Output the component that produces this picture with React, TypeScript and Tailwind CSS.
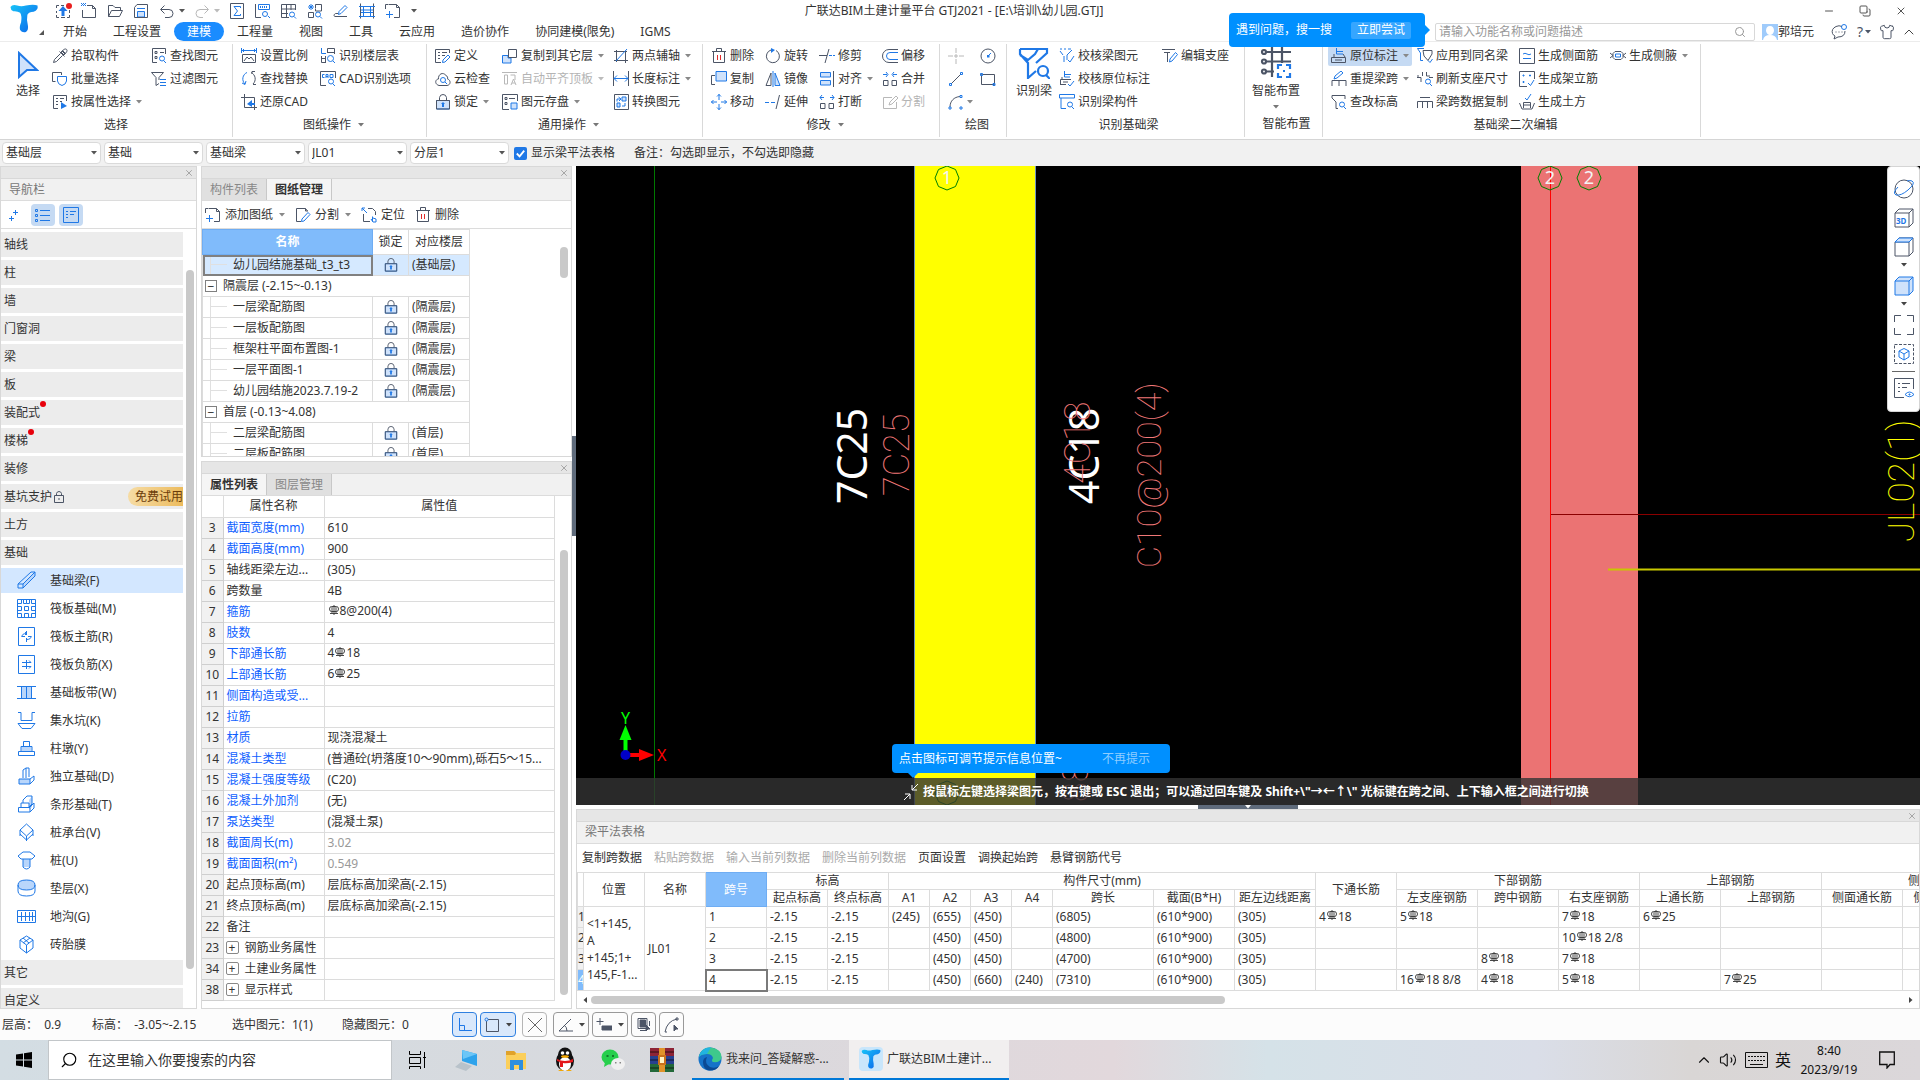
import { useState } from 'react';
import type { ReactNode } from 'react';
import clsx from 'clsx';
import { ChevronUp, Copy, Minus, Search, Shirt, Volume2, X } from 'lucide-react';

// d: dark strokes, b: blue strokes, f: light blue area, k: solid blue, r: red strokes
interface Glyph {
    d?: string;
    b?: string;
    f?: string;
    k?: string;
    r?: string;
}

const GLYPHS: Record<string, Glyph> = {
    upload: { d: 'M1.500 5V2.500H4M6 2.500h3M1.500 8v2M14.500 7v3M1.500 12v2.500H4M6 14.500h4M12 14.500h2.500V12', k: 'M8 3L12.500 8H9.500V13H6.500V8H3.500Z' },
    newFile: { d: 'M6 2.500H11.500L14.500 5.500V14.500H1.500V7M11.500 2.500V5.500H14.500', b: 'M0 .5h1M2 .5h1M4 .5h1M1 1.500h1M3 1.500h1M0 2.500h1M2 2.500h1M4 2.500h1' },
    folder: { d: 'M1.500 13.500V2.500H6L8 4.500H13.500V7M1.500 13.500L4.500 7.500H15.500L12.500 13.500Z' },
    save: { d: 'M1.500 14.500V4.500L4 1.500H14.500V14.500Z', f: 'M4.500 14V8.500H11.500V14Z', b: 'M4 5.500H12' },
    undo: { d: 'M5.500 2.500L1.500 6.500L5.500 10.500M2 6.500H10A4 4 0 0 1 10 14.500H6' },
    redo: { d: 'M10.500 2.500L14.500 6.500L10.500 10.500M14 6.500H6A4 4 0 0 0 6 14.500H9' },
    sum: { d: 'M1.500 .5H14.500V15.500H1.500Z', b: 'M11.500 5V3.500H5L8.500 8L5 12.500H11.500V11' },
    ruler: { d: 'M.5 1V14.500H6', b: 'M3.500 1.500H14.500V6.500H3.500ZM5.500 3v2M7.500 3v2M9.500 3v2M11.500 3v2M13 13l2 2M12.500 11A2.500 2.500 0 1 1 7.500 11A2.500 2.500 0 1 1 12.500 11' },
    gridFind: { d: 'M8 14.500H.5V1.500H14.500V7M.5 6H14M.5 10.500H7M5.500 2V14M10 2V7', b: 'M13 13.500l2 2M13.500 11.500A2.500 2.500 0 1 1 8.500 11.500A2.500 2.500 0 1 1 13.500 11.500' },
    gearFind: { d: 'M8.500 5.500V1.500H14.500V8H8.500V6M1.500 9.500H6.500V14.500H1.500Z', b: 'M4 1v6M1 4h6M2 2l4 4M6 2L2 6M13 13.500l2 2M13.500 11.500A2.500 2.500 0 1 1 8.500 11.500A2.500 2.500 0 1 1 13.500 11.500' },
    pen: { d: 'M5 10.500H2.500C0 12 1 14 3 13.500H14', b: 'M5.500 11.500L6 8.500L12 2.500L14 4.500L8 10.500Z' },
    beamGrid: { d: 'M1.500 .5V15.500M14.500 .5V15.500', b: 'M0 3.500H16M2 7H14M2 9.500H14M0 13.500H16M4.500 3V13M11.500 3V13' },
    frameAdd: { d: 'M3.500 1.500H11.500L14.500 4.500V14.500H9M3 1.500H.5V6M11.500 1.500V4.500H14.500', b: 'M4.500 8V15M1 11.500H8' },
    sheetPen: { d: 'M6 14.500H1.500V1.500H10.500L12.500 4M10.500 1.500V4H13', b: 'M6.500 14.500L7 12L13 5.500L15 7.500L9 14Z' },
    locate: { d: 'M7 1.500H11.500L14.500 4.500V8M2.500 7V14.500H9', b: 'M1 1h3M1 1v3M1 1L6 6M11.500 14.500V9.500M10 12L12 15H15V12L12 11' },
    picker: { d: 'M9 4L12 1.500C14 0 16 2 14.500 4L12 7M7.500 3.500L12.500 8.500M8.500 5.500L2.500 11.500L1.500 14.500L4.500 13.500L10.500 7.500M10 3l3 3M10.500 2.500l3 3M9 4l3 3' },
    batch: { d: 'M3.500 10.500H.5V1.500H9.500V4', b: 'M5.500 5.500H14.500V10Q14 13.500 10 14.500Q6 13.500 5.500 10Z' },
    attr: { d: 'M6 14.500H1.500V1.500H14.500V7M4 4.500h2M4 7.500h2M4 10.500h2M8 4.500h4M8 7.500h2', k: 'M9 8L15 12L9 15Z' },
    find: { d: 'M6 14.500H1.500V.5H14.500V6M4 3.500h2v2H4ZM4 8.500h2v2H4ZM9 4.500h4', b: 'M13 13l2 2M13.500 10.500A2.500 2.500 0 1 1 8.500 10.500A2.500 2.500 0 1 1 13.500 10.500' },
    filter: { d: 'M.5 1.500H12.500L8 6.500V9M.5 1.500L5 6.500V14.500L8 12.500', b: 'M9 8.500H15M9 11.500H15M9 14.500H15' },
    scale: { d: 'M1.500 6.500H14.500V14.500H1.500ZM3 13L6 9L8 11L10 9L13 13', b: 'M.5 0V5M15.500 0V5M1 2.500H15M3 1L1.500 2.500L3 4M13 1L14.500 2.500L13 4' },
    replace: { b: 'M6 1.500A7 7 0 0 0 4 13M4 13.500L1 12M4 13.500L5 10', d: 'M10 1.500A7 7 0 0 1 12 13M11 3V.5H14M12 13.500H15' },
    restore: { d: 'M3.500 0V13.500H16M0 3.500H13.500V16', k: 'M6 10L11 6V9H14V11H11V13Z' },
    floors: { b: 'M1.500 0V5.500H6M13 13l2 2M13.500 10.500A3 3 0 1 1 7.500 10.500A3 3 0 1 1 13.500 10.500', d: 'M7.500 5V.5H14.500V6M8 4.500H14M1.500 8V14.500H6M1.500 10.500H6M5.500 8V14' },
    cadOpt: { d: 'M6 14.500H.5V.5H15.500V7', b: 'M4.500 3.500H2.500V6.500H4.500M6 7V3.500H8V7M6 5.500H8M10 3.500H13V6.500H10ZM13 13l2 2M13.500 10.500A2.500 2.500 0 1 1 8.500 10.500A2.500 2.500 0 1 1 13.500 10.500' },
    define: { d: 'M6 14.500H.5V1.500H14.500V5M3 4.500h2M7 4.500h5M3 7.500h2M7 7.500h3M3 10.500h2', b: 'M7.500 14.500L8 12L13 7L15 9L10 14Z' },
    cloud: { d: 'M4 14.500C-1 13 .5 8 3.500 8C3 3 8 .5 11 4.500C12.500 5 13 7 12.500 8C16 9 16 14 12 14.500Z', b: 'M10 11l2 2M10.500 9A2.500 2.500 0 1 1 5.500 9A2.500 2.500 0 1 1 10.500 9' },
    lock: { f: 'M1.500 6.500H14.500V15H1.500Z', d: 'M1.500 6.500H14.500V15H1.500ZM4.500 6V3.500Q5 .5 8 .5Q11 .5 11.500 3.500V6', k: 'M8 8L10 10H9V13H7V10H6Z' },
    copyTo: { d: 'M6.500 1.500H14.500V9.500H6.500Z', f: 'M.5 7.500H6V10H9V15H.5Z' },
    alignTop: { d: 'M0 1.500H15M2.500 4H5.500V13H2.500ZM8.500 4H13V9M9 14L11.500 8L14 14M10 12h3' },
    store: { d: 'M7 15.500H.5V.5H15.500V7M3 3.500h2v2H3ZM3 8.500h2v2H3ZM7 4.500h6', f: 'M9 9H15V15H9Z' },
    twoPoint: { d: 'M3.500 2V14M1 3.500H14M1 12.500H15M12.500 3V15', b: 'M3 13L14 1' },
    lenDim: { d: 'M.5 0V15M15.500 0V15', b: 'M1 7.500H15M4 4.500L1 7.500L4 10.500M12 4.500L15 7.500L12 10.500' },
    convert: { d: 'M1.500 .5H15.500V15.500H1.500Z', b: 'M4 7.500V5H7M5.500 3L8 5L6 7M12 9V12H9', f: 'M9 3H13V7H9ZM4 9H7V13H4Z' },
    del: { d: 'M1 3.500H15M5.500 3V.5H10.500V3M2.500 4V14.500H13.500V4', r: 'M6.500 7V12M9.500 7V12' },
    copy: { d: 'M4 13.500H.5V4.500H4', f: 'M5 .5H15.500V10H5Z' },
    move: { b: 'M8 0V6M8 10V16M0 8H6M10 8H16M6 2.500L8 .5L10 2.500M6 13.500L8 15.500L10 13.500M2.500 6L.5 8L2.500 10M13.500 6L15.500 8L13.500 10' },
    rotate: { d: 'M11 2.500A6.500 6.500 0 1 1 6 2', k: 'M6 0L10 2L6 5Z' },
    mirror: { d: 'M6 2V14.500H1Z', f: 'M10 2V14.500H15Z', b: 'M8 0V16' },
    extend: { b: 'M0 8.500H4M6 8.500H10', d: 'M14.500 1L11 15' },
    trim: { b: 'M10 7.500H13M14 7.500H16', d: 'M0 7.500H8M10 1L6 15' },
    align: { f: 'M1.500 1.500H11.500V6H1.500ZM1.500 9.500H11.500V14H1.500Z', d: 'M14.500 0V16' },
    breakIt: { b: 'M1 3.500H5M11 3.500H15M3 1L1 3.500L3 6M13 1L15 3.500L13 6', d: 'M1.500 9.500H6V14.500H1.500ZM10 9.500H14.500V14.500H10Z' },
    merge: { b: 'M1 3.500H5M11 3.500H15M4 1L6 3.500L4 6M12 1L10 3.500L12 6', d: 'M1.500 9.500H6V14.500H1.500ZM10 9.500H14.500V14.500H10Z' },
    offset: { d: 'M16 1.500H7A6 6 0 0 0 7 14.500H16', b: 'M16 4.500H8A3.500 3.500 0 0 0 8 11.500H16' },
    split: { d: 'M10 3.500H1.500V14.500H14.500V8M7 11L8 8L14 2L16 4L10 10Z' },
    point: { d: 'M8 0V5M8 11V16M0 8H5M11 8H16M7 7h2v2H7Z' },
    circle: { d: 'M15 8A7 7 0 1 1 1 8A7 7 0 1 1 15 8', b: 'M8 8L11 5', k: 'M7 7h2.500v2.500H7Z' },
    line: { d: 'M3 13L13 3', b: 'M1.500 12.500h2v2h-2ZM12.500 1.500h2v2h-2Z' },
    rect: { d: 'M1.500 3.500H14.500V13.500H1.500Z', b: 'M.5 2.500h2v2h-2ZM13 12.500h2v2h-2Z' },
    arc: { d: 'M2 13C2 7 6 3 12 2.500', b: 'M1 13h2v2H1ZM12 1.500h2v2h-2ZM12 13h2v2h-2Z' },
    checkBeam: { b: 'M1 1h2M5 1h2M9 1h3M1 3L4 7M5 8V14M13 2L8 7V12M9 12L11 14L15 8' },
    checkNote: { d: 'M1.500 13.500V8.500H12M3 8V6M1 13.500H7M4 11h5', b: 'M5.500 0V6H11M6 3.500H12M9 13L11 15L15 10' },
    idBeam: { b: 'M.5 4V.5H15.500V4ZM2 4V14.500H7M13 13l2 2M13.500 10.500A2.500 2.500 0 1 1 8.500 10.500A2.500 2.500 0 1 1 13.500 10.500' },
    editSup: { d: 'M0 1.500H13M2 4.500H8M5.500 5V14', b: 'M7.500 14L8 11L13.500 4.500L15.500 6.500L10 13Z' },
    note: { d: 'M.5 14.500V9.500H14.500V14.500ZM3 9V6M12 6L14 9M4 12H11', b: 'M5.500 0V6H12M6 3.500H12' },
    span: { d: 'M1 15V9.500H15V15M8 10V15', b: 'M3 8L4 5L10 0L12 2L6 7Z' },
    elev: { d: 'M1 1.500H14V5M1 1.500V4L5 8V14.500H7', b: 'M13 13l2 2M13.500 10.500A2.500 2.500 0 1 1 8.500 10.500A2.500 2.500 0 1 1 13.500 10.500' },
    apply: { b: 'M7 .5H.5L3.500 5V12.500H6M11 12.500L13 14.500L15.500 11', d: 'M6 2.500H15V6L11 12.500L7 8Z' },
    refresh: { d: 'M0 6.500H4V11M5.500 1V5M9.500 1V5H13M12 6.500H16M1 6.500V4', b: 'M13 13l2 2M13.500 10.500A2.500 2.500 0 1 1 8.500 10.500A2.500 2.500 0 1 1 13.500 10.500' },
    spanCopy: { d: 'M3 3.500H13M.5 14V7.500H15.500V14M5.500 8V14M10.500 8V14' },
    side: { d: 'M.5 .5H15.500V15.500H.5Z', b: 'M4 6Q6 4.500 8 6T12 6M4 10.500H12' },
    erect: { d: 'M8 15.500H.5V.5H15.500V8', b: 'M4 4h1v1H4ZM10.500 4h1v1h-1ZM4 10.500h1v1H4ZM9 12L11.500 14.500L15 9' },
    earth: { d: 'M.5 9L3 15H13L15.500 9M4.500 14V8.500H11.500V14M4 11H12', b: 'M6 4L8 6L12 0' },
    haunch: { d: 'M0 5L3 7.500L0 10M16 5L13 7.500L16 10M3 5.500L5 3.500H11L13 5.500V9.500L11 11.500H5L3 9.500Z', b: 'M5.500 6H10.500V9H5.500Z' },
};

function Glyph16({ name, muted, className }: { name: string; muted?: boolean; className?: string }) {
    const g = GLYPHS[name];
    const dark = muted ? '#b8b8b8' : '#4c5566';
    const blue = muted ? '#b8b8b8' : '#1f78e6';
    return (
        <svg viewBox="0 0 16 16" className={className ?? 'size-4 shrink-0'} fill="none" strokeWidth={1}>
            {g.f && <path d={g.f} fill="#cfe2fb" stroke={blue} />}
            {g.d && <path d={g.d} stroke={dark} />}
            {g.b && <path d={g.b} stroke={blue} />}
            {g.k && <path d={g.k} fill={blue} />}
            {g.r && <path d={g.r} stroke="#e02b2b" />}
        </svg>
    );
}

function Caret({ className = 'text-[#777]' }: { className?: string }) {
    return (
        <svg viewBox="0 0 6 4" className={clsx('h-1 w-1.5 shrink-0', className)}>
            <path d="M0 0H6L3 3.500Z" fill="currentColor" />
        </svg>
    );
}

function Logo({ className }: { className: string }) {
    return (
        <svg viewBox="0 0 30 30" className={className}>
            <defs>
                <linearGradient id="logo" x1="0" y1="0" x2="1" y2="1">
                    <stop offset="0" stopColor="#17c3f8" />
                    <stop offset="1" stopColor="#0b62ea" />
                </linearGradient>
            </defs>
            <path
                d="M1 3Q3 0 8 1.500Q12 3 17 1.500Q25 0 29 1.500Q30 6 25 8Q20 8 18.500 11Q17.500 16 19 22Q20 27 17 29Q13 30 11 27Q10 24 12 19Q13 12 11 9Q8 7 4 7.500Q1 6 1 3Z"
                fill="url(#logo)"
            />
        </svg>
    );
}

/* ---------- title bar ---------- */

const QUICK: { icon: string; w: string; caret?: boolean; muted?: boolean }[] = [
    { icon: 'upload', w: 'w-[26px]' },
    { icon: 'newFile', w: 'w-[26px]' },
    { icon: 'folder', w: 'w-[26px]' },
    { icon: 'save', w: 'w-[26px]' },
    { icon: 'undo', w: 'w-[35px]', caret: true },
    { icon: 'redo', w: 'w-[35px]', caret: true, muted: true },
    { icon: 'sum', w: 'w-[26px]' },
    { icon: 'ruler', w: 'w-[26px]' },
    { icon: 'gridFind', w: 'w-[26px]' },
    { icon: 'gearFind', w: 'w-[26px]' },
    { icon: 'pen', w: 'w-[26px]' },
    { icon: 'beamGrid', w: 'w-[26px]' },
    { icon: 'frameAdd', w: 'w-[26px]' },
];

const TABS = ['开始', '工程设置', '建模', '工程量', '视图', '工具', '云应用', '造价协作', '协同建模(限免)', 'IGMS'];

function TitleBar() {
    const [tab, setTab] = useState('建模');
    return (
        <header className="relative flex h-[42px] shrink-0 border-b border-[#ececec]">
            <div className="flex w-[50px] shrink-0 pt-1 pl-[9px]">
                <Logo className="h-[29px] w-[30px]" />
                <svg viewBox="0 0 5 5" className="mt-[26px] size-[5px] shrink-0">
                    <path d="M5 0V5H0Z" fill="#555" />
                </svg>
            </div>
            <div className="flex min-w-0 flex-1 flex-col">
                <div className="flex h-[22px] items-center">
                    <div className="flex flex-1 items-center pl-[5px]">
                        {QUICK.map((q) => (
                            <button key={q.icon} aria-label={q.icon} className={clsx('relative flex shrink-0 items-center gap-1', q.w)}>
                                <Glyph16 name={q.icon} muted={q.muted} />
                                {q.caret && <Caret className={q.muted ? 'text-[#bbb]' : 'text-[#555]'} />}
                                {q.icon === 'upload' && <span className="absolute top-0 left-[11px] size-1.5 rounded-full bg-[#e81f1f]" />}
                            </button>
                        ))}
                        <Caret className="text-[#555]" />
                    </div>
                    <h1 className="pr-[54px] text-[12px]">广联达BIM土建计量平台 GTJ2021 - [E:\培训\幼儿园.GTJ]</h1>
                    <div className="flex flex-1 items-center justify-end gap-6 pr-[13px] text-[#555]">
                        <button aria-label="最小化">
                            <Minus className="size-3" strokeWidth={2} />
                        </button>
                        <button aria-label="还原">
                            <Copy className="size-3 -scale-x-100 rotate-90" strokeWidth={2} />
                        </button>
                        <button aria-label="关闭">
                            <X className="size-3" strokeWidth={2} />
                        </button>
                    </div>
                </div>
                <nav className="flex h-[19px] items-center">
                    {TABS.map((t) => (
                        <button
                            key={t}
                            onClick={() => setTab(t)}
                            className={clsx('h-[19px] shrink-0 rounded-full px-[13px]', tab === t && 'bg-[#1a8cff] text-white')}
                        >
                            {t}
                        </button>
                    ))}
                    <div className="ml-auto flex items-center">
                        <div className="flex h-[18px] w-[320px] items-center rounded-xs border border-[#d8d8d8] bg-white pr-2">
                            <input
                                aria-label="搜索"
                                placeholder="请输入功能名称或问题描述"
                                className="w-full bg-transparent pl-[3px] text-[12px] outline-none placeholder:text-[#999]"
                            />
                            <Search className="size-3 shrink-0 text-[#999]" />
                        </div>
                        <svg viewBox="0 0 16 16" className="ml-[7px] size-4">
                            <path d="M0 0H16V16H0Z" fill="#9fcbfb" />
                            <path d="M4 7Q4 2 8 2Q12 2 12 7Q11 11 8 11Q5 11 4 7ZM1 16Q2 11 8 11Q14 11 15 16Z" fill="#fff" />
                        </svg>
                        <span>郭培元</span>
                        <svg viewBox="0 0 16 16" className="ml-[17px] size-4" fill="none" stroke="#4c5566">
                            <path d="M11 2.500Q8 1 5 2.500Q0 5 1.500 9.500Q2 11 4 12L3 15L7 13Q14 13 14 7M4.500 8h1M7.500 8h1M10.500 8h1" />
                            <circle cx="13" cy="3" r="2.500" stroke="#1f78e6" />
                        </svg>
                        <span className="ml-2.5 text-[14px] text-[#4c5566]">?</span>
                        <Caret className="ml-0.5 text-[#4c5566]" />
                        <Shirt className="ml-2 size-4 text-[#4c5566]" strokeWidth={1.5} />
                        <ChevronUp className="mr-[3px] ml-1.5 size-4 text-[#444]" strokeWidth={1.5} />
                    </div>
                </nav>
            </div>
            <div className="absolute top-[13px] right-[495px] z-20 flex h-[34px] w-[196px] items-center justify-between rounded-sm bg-[#0090ff] pr-3.5 pl-[7px] text-white">
                <span>遇到问题，搜一搜</span>
                <button className="h-[17px] rounded-xs bg-[#36a6ff] px-1.5">立即尝试</button>
                <svg viewBox="0 0 5 10" className="absolute top-3 -right-[5px] h-2.5 w-[5px]">
                    <path d="M0 0L5 5L0 10Z" fill="#0090ff" />
                </svg>
            </div>
        </header>
    );
}

/* ---------- ribbon ---------- */

interface Cmd {
    icon: string;
    label?: string;
    caret?: boolean;
    off?: boolean;
    on?: boolean;
}

interface Group {
    title: string;
    w: string;
    caret?: boolean;
    big?: ReactNode;
    cols: { w: string; cmds: Cmd[] }[];
}

function BigButton({ label, className, caret, children }: { label: string; className: string; caret?: boolean; children: ReactNode }) {
    return (
        <button className={clsx('flex shrink-0 flex-col items-center', className)}>
            <span className="flex h-[39px] items-end pb-1">{children}</span>
            <span className="leading-4">{label}</span>
            {caret && <Caret className="mt-1.5 text-[#777]" />}
        </button>
    );
}

const GROUPS: Group[] = [
    {
        title: '选择',
        w: 'w-[233px]',
        big: (
            <BigButton label="选择" className="w-[52px] pl-1">
                <svg viewBox="0 0 22 28" className="h-7 w-[22px]">
                    <path d="M2 2L20 19H10L2 26Z" fill="#cfe2fb" stroke="#1f78e6" strokeWidth="2" />
                </svg>
            </BigButton>
        ),
        cols: [
            { w: 'w-[99px]', cmds: [{ icon: 'picker', label: '拾取构件' }, { icon: 'batch', label: '批量选择' }, { icon: 'attr', label: '按属性选择', caret: true }] },
            { w: 'w-[80px]', cmds: [{ icon: 'find', label: '查找图元' }, { icon: 'filter', label: '过滤图元' }] },
        ],
    },
    {
        title: '图纸操作',
        w: 'w-[194px] pl-2',
        caret: true,
        cols: [
            { w: 'w-[79px]', cmds: [{ icon: 'scale', label: '设置比例' }, { icon: 'replace', label: '查找替换' }, { icon: 'restore', label: '还原CAD' }] },
            { w: 'w-[104px]', cmds: [{ icon: 'floors', label: '识别楼层表' }, { icon: 'cadOpt', label: 'CAD识别选项' }] },
        ],
    },
    {
        title: '通用操作',
        w: 'w-[276px] pl-2',
        caret: true,
        cols: [
            { w: 'w-[67px]', cmds: [{ icon: 'define', label: '定义' }, { icon: 'cloud', label: '云检查' }, { icon: 'lock', label: '锁定', caret: true }] },
            {
                w: 'w-[111px]',
                cmds: [
                    { icon: 'copyTo', label: '复制到其它层', caret: true },
                    { icon: 'alignTop', label: '自动平齐顶板', caret: true, off: true },
                    { icon: 'store', label: '图元存盘', caret: true },
                ],
            },
            { w: 'w-[80px]', cmds: [{ icon: 'twoPoint', label: '两点辅轴', caret: true }, { icon: 'lenDim', label: '长度标注', caret: true }, { icon: 'convert', label: '转换图元' }] },
        ],
    },
    {
        title: '修改',
        w: 'w-[237px] pl-2',
        caret: true,
        cols: [
            { w: 'w-[54px]', cmds: [{ icon: 'del', label: '删除' }, { icon: 'copy', label: '复制' }, { icon: 'move', label: '移动' }] },
            { w: 'w-[54px]', cmds: [{ icon: 'rotate', label: '旋转' }, { icon: 'mirror', label: '镜像' }, { icon: 'extend', label: '延伸' }] },
            { w: 'w-[63px]', cmds: [{ icon: 'trim', label: '修剪' }, { icon: 'align', label: '对齐', caret: true }, { icon: 'breakIt', label: '打断' }] },
            { w: 'w-[50px]', cmds: [{ icon: 'offset', label: '偏移' }, { icon: 'merge', label: '合并' }, { icon: 'split', label: '分割', off: true }] },
        ],
    },
    {
        title: '绘图',
        w: 'w-[67px] pl-2',
        cols: [
            { w: 'w-[32px]', cmds: [{ icon: 'point', off: true }, { icon: 'line' }, { icon: 'arc', caret: true }] },
            { w: 'w-[20px]', cmds: [{ icon: 'circle' }, { icon: 'rect' }] },
        ],
    },
    {
        title: '识别基础梁',
        w: 'w-[238px] pl-1.5',
        big: (
            <BigButton label="识别梁" className="w-[46px] pr-1">
                <svg viewBox="0 0 32 32" className="size-8" fill="none" stroke="#1f78e6" strokeWidth="2.200">
                    <path d="M2 2H29V6L18 16M2 2V7L10 16V31L18 24M2 8L10 13L17 7L20 2" />
                    <circle cx="25" cy="24" r="5" />
                    <path d="M28 28L32 32" />
                </svg>
            </BigButton>
        ),
        cols: [
            { w: 'w-[103px]', cmds: [{ icon: 'checkBeam', label: '校核梁图元' }, { icon: 'checkNote', label: '校核原位标注' }, { icon: 'idBeam', label: '识别梁构件' }] },
            { w: 'w-[70px]', cmds: [{ icon: 'editSup', label: '编辑支座' }] },
        ],
    },
    {
        title: '智能布置',
        w: 'w-[78px] pl-1.5',
        big: (
            <BigButton label="智能布置" className="w-[50px]" caret>
                <svg viewBox="0 0 32 32" className="size-8" fill="none" stroke="#4c5566" strokeWidth="2.200">
                    <path d="M6 5H31M6 14.500H31M6 24.500H14M12 0V30M22 0V16" />
                    <circle cx="4" cy="5" r="2" />
                    <circle cx="4" cy="14.500" r="2" />
                    <circle cx="4" cy="24.500" r="2" />
                    <path d="M18 22V18H22M26 18H30V22M30 26V30H26M22 30H18V26M23 24h2" stroke="#1f78e6" />
                </svg>
            </BigButton>
        ),
        cols: [],
    },
    {
        title: '基础梁二次编辑',
        w: 'w-[378px] pl-2',
        cols: [
            {
                w: 'w-[86px]',
                cmds: [
                    { icon: 'note', label: '原位标注', caret: true, on: true },
                    { icon: 'span', label: '重提梁跨', caret: true },
                    { icon: 'elev', label: '查改标高' },
                ],
            },
            { w: 'w-[102px]', cmds: [{ icon: 'apply', label: '应用到同名梁' }, { icon: 'refresh', label: '刷新支座尺寸' }, { icon: 'spanCopy', label: '梁跨数据复制' }] },
            { w: 'w-[91px]', cmds: [{ icon: 'side', label: '生成侧面筋' }, { icon: 'erect', label: '生成架立筋' }, { icon: 'earth', label: '生成土方' }] },
            { w: 'w-[84px]', cmds: [{ icon: 'haunch', label: '生成侧腋', caret: true }] },
        ],
    },
];

function Ribbon() {
    return (
        <div className="flex h-[97px] shrink-0 overflow-hidden">
            {GROUPS.map((g) => (
                <section key={g.title} className={clsx('my-0.5 flex shrink-0 flex-col border-r border-[#d9d9d9]', g.w)}>
                    <div className="flex h-[70px]">
                        {g.big}
                        {g.cols.map((col, i) => (
                            <div key={i} className={clsx('flex shrink-0 flex-col', col.w)}>
                                {col.cmds.map((c) => (
                                    <button
                                        key={c.icon}
                                        disabled={c.off}
                                        aria-label={c.label ?? c.icon}
                                        className="flex h-[23px] items-center gap-[3px] disabled:text-[#b4b4b4]"
                                    >
                                        <span className={clsx('-mx-[3px] flex h-5 items-center gap-[3px] rounded-xs px-[3px]', c.on && 'bg-[#c5daf3]')}>
                                            <Glyph16 name={c.icon} muted={c.off} />
                                            {c.label}
                                            {c.caret && <Caret className={clsx(c.label && 'ml-0.5', c.off ? 'text-[#bbb]' : 'text-[#888]')} />}
                                        </span>
                                    </button>
                                ))}
                            </div>
                        ))}
                    </div>
                    <div className={clsx('flex items-center justify-center gap-[7px]', g.caret ? 'h-6' : 'h-[26px]')}>
                        {g.title}
                        {g.caret && <Caret />}
                    </div>
                </section>
            ))}
        </div>
    );
}

const SELECTS = [
    ['楼层', '基础层'],
    ['类别', '基础'],
    ['构件类型', '基础梁'],
    ['构件', 'JL01'],
    ['分层', '分层1'],
];

function ContextBar() {
    return (
        <div className="flex h-[27px] shrink-0 items-center gap-[3px] border-t border-[#d5d5d5] bg-[#f1f1f1] pl-0.5">
            {SELECTS.map(([name, value]) => (
                <label key={name} className="relative flex w-[99px] items-center">
                    <select aria-label={name} className="h-[22px] w-full appearance-none rounded-sm border border-[#dadada] bg-white pl-[3px] outline-none">
                        <option>{value}</option>
                    </select>
                    <Caret className="pointer-events-none absolute right-1 text-[#555]" />
                </label>
            ))}
            <label className="ml-0.5 flex items-center gap-1">
                <span className="relative flex size-[13px]">
                    <input type="checkbox" defaultChecked className="peer size-[13px] appearance-none rounded-xs bg-[#1f78e6]" />
                    <svg viewBox="0 0 14 14" className="pointer-events-none absolute inset-0" fill="none" stroke="#fff" strokeWidth="2">
                        <path d="M3 7L6 10L11 4" />
                    </svg>
                </span>
                显示梁平法表格
            </label>
            <span className="ml-4">备注：勾选即显示，不勾选即隐藏</span>
        </div>
    );
}

/* ---------- left panels ---------- */

function PanelStrip() {
    return (
        <div className="flex h-3 shrink-0 items-center justify-end border-b border-[#d8d8d8] bg-[#e6e6e6] pr-0.5">
            <button aria-label="关闭面板">
                <X className="size-2.5 text-[#999]" strokeWidth={2} />
            </button>
        </div>
    );
}

const CATEGORIES: { name: string; dot?: boolean; trial?: boolean }[] = [
    { name: '轴线' },
    { name: '柱' },
    { name: '墙' },
    { name: '门窗洞' },
    { name: '梁' },
    { name: '板' },
    { name: '装配式', dot: true },
    { name: '楼梯', dot: true },
    { name: '装修' },
    { name: '基坑支护', trial: true },
    { name: '土方' },
    { name: '基础' },
];

const FOUNDATIONS: { name: string; d: string; f?: string }[] = [
    { name: '基础梁(F)', d: 'M1 13L14 1H18V5L6 17H1ZM1 13H6V17M6 13L18 1', f: 'M6 13L18 1V5L6 17Z' },
    {
        name: '筏板基础(M)',
        d: 'M.5 .5H18.500V18.500H.5ZM4.500 1V4.500H1M9.500 1V4.500H6.500V1M12.500 1V4.500H9.500M18 4.500H14.500V1M1 7.500H4.500V11.500H1M7.500 7.500H11.500V11.500H7.500ZM18 7.500H14.500V11.500H18M1 14.500H4.500V18M7.500 18V14.500H11.500V18M14.500 18V14.500H18',
    },
    { name: '筏板主筋(R)', d: 'M1.500 .5H17.500V18.500H1.500ZM9.500 4V8M9.500 11V15M5 9.500Q5 6.500 9.500 6.500M14 9.500Q14 12.500 9.500 12.500M4.500 9.500H8M11 9.500H14.500M8 5L9.500 6.500L8 8' },
    { name: '筏板负筋(X)', d: 'M1.500 .5H17.500V18.500H1.500ZM5 7.500H14M5 11.500H14M9.500 5V14M12 5.500L14 7.500M12 13.500L14 11.500' },
    { name: '基础板带(W)', d: 'M0 3.500H19M0 15.500H19M4.500 3V16M9.500 3V16M14.500 3V16', f: 'M4.500 3.500H14.500V15.500H4.500Z' },
    { name: '集水坑(K)', d: 'M1 1.500H4V9.500H15V1.500H18M1 12.500H18L14 17.500H5Z' },
    { name: '柱墩(Y)', d: 'M6.500 7V2.500H12.500V7M4 12V7.500H15V12M1.500 12.500H17.500V16.500H1.500Z', f: 'M4.500 7.500H14.500V12.500H4.500Z' },
    { name: '独立基础(D)', d: 'M6 11V3L9 1H12V10M9 1V11M2 12H13L17 9V13L13 17H2ZM13 12V17', f: 'M2 12H13V17H2Z' },
    { name: '条形基础(T)', d: 'M6 8V5L10 1H15V9L12 12M4 12V8H12V12M1.500 12.500H13V17H1.500ZM13 12L17 8V13L13 17', f: 'M12 5L15 1V12L12 15Z' },
    { name: '桩承台(V)', d: 'M9.500 1L16 7L9.500 13L3 7ZM3 7V13M16 7V13M9.500 13V18M3 11L9.500 17L16 11' },
    { name: '桩(U)', d: 'M1 5L6 1H13L18 5L15 8H4ZM6 8V16Q9.500 20 13 16V8', f: 'M6 8H13V16H6Z' },
    { name: '垫层(X)', d: 'M1 6Q1 1 9.500 1Q18 1 18 6V12Q18 17 9.500 17Q1 17 1 12ZM1 6Q1 11 9.500 11Q18 11 18 6', f: 'M1 6Q1 1 9.500 1Q18 1 18 6Q18 11 9.500 11Q1 11 1 6Z' },
    { name: '地沟(G)', d: 'M.5 3.500H18.500V15.500H.5ZM.5 9.500H18.500M4.500 5V14M8.500 5V14M12.500 5V14M15.500 5V14' },
    { name: '砖胎膜', d: 'M9.500 1L16 5V13L9.500 18L3 13V5ZM3 5L9.500 10L16 5M9.500 10V18M6 3L12 8M13 3L6 8' },
];

function NavPanel() {
    const [active, setActive] = useState('基础梁(F)');
    return (
        <aside className="flex w-[197px] shrink-0 flex-col overflow-hidden border border-[#d8d8d8] bg-white">
            <PanelStrip />
            <div className="h-[22px] shrink-0 border-b border-[#dcdcdc] bg-[#f1f1f1] pl-2 leading-[21px] text-[#777]">导航栏</div>
            <div className="flex h-7 shrink-0 items-center gap-1 border-b border-[#dcdcdc] pl-[7px]">
                <button aria-label="展开" className="mr-[7px]">
                    <svg viewBox="0 0 12 14" className="h-3.5 w-3" stroke="#1f78e6" fill="none">
                        <path d="M7.500 2V7M5 4.500H10M3.500 8V13M1 10.500H6" />
                    </svg>
                </button>
                <button aria-label="列表" className="flex h-[22px] w-6 items-center justify-center rounded-sm bg-[#c5daf3]">
                    <svg viewBox="0 0 16 16" className="size-4" stroke="#1f78e6" fill="none">
                        <path d="M5 3.500H15M5 8.500H15M5 13.500H15M.5 2.500h2v2h-2ZM.5 7.500h2v2h-2ZM.5 12.500h2v2h-2Z" />
                    </svg>
                </button>
                <button aria-label="说明" className="flex h-[22px] w-6 items-center justify-center rounded-sm bg-[#c5daf3]">
                    <svg viewBox="0 0 16 16" className="size-4" stroke="#1f78e6" fill="none">
                        <path d="M.5 .5H15.500V15.500H.5ZM3 4.500h2M7 4.500h6M3 7.500h2M7 7.500h4M3 10.500h2" />
                    </svg>
                </button>
            </div>
            <div className="flex min-h-0 flex-1 overflow-hidden">
                <div className="flex flex-1 flex-col gap-[3px] overflow-hidden pt-[3px]">
                    {CATEGORIES.map((c) => (
                        <button key={c.name} className="flex h-[25px] shrink-0 items-center bg-[#ececec] pl-[3px]">
                            <span className="relative">
                                {c.name}
                                {c.dot && <span className="absolute -top-1 -right-1.5 size-1.5 rounded-full bg-red-600" />}
                            </span>
                            {c.trial && (
                                <>
                                    <svg viewBox="0 0 10 12" className="ml-0.5 h-3 w-2.5" fill="none" stroke="#4c5566">
                                        <path d="M.5 4.500H9.500V11.500H.5ZM2.500 4V2.500Q3 .5 5 .5Q7 .5 7.500 2.500V4M5 7V9" />
                                    </svg>
                                    <span className="ml-auto h-[19px] rounded-l-full bg-linear-to-r from-[#f6dca4] to-[#ecbb5c] pl-[7px] leading-[19px] text-[#6b3d0a]">
                                        免费试用
                                    </span>
                                </>
                            )}
                        </button>
                    ))}
                    {FOUNDATIONS.map((f) => (
                        <button
                            key={f.name}
                            onClick={() => setActive(f.name)}
                            className={clsx('flex h-[25px] shrink-0 items-center gap-3.5 pl-4', active === f.name && 'bg-[#d3e7ff]')}
                        >
                            <svg viewBox="0 0 19 19" className="size-[19px]" fill="none" stroke="#1f78e6">
                                {f.f && <path d={f.f} fill="#b9d6fb" stroke="none" />}
                                <path d={f.d} />
                            </svg>
                            {f.name}
                        </button>
                    ))}
                    <button className="h-[25px] shrink-0 bg-[#ececec] pl-[3px] text-left">其它</button>
                    <button className="h-[25px] shrink-0 bg-[#ececec] pl-[3px] text-left">自定义</button>
                </div>
                <div className="w-[13px] shrink-0 pt-[41px] pl-[3px]">
                    <div className="h-[699px] max-h-full w-2 rounded-full bg-[#c9c9c9]" />
                </div>
            </div>
        </aside>
    );
}

const DRAWINGS: { name: string; floor?: string; sel?: boolean }[] = [
    { name: '幼儿园结施基础_t3_t3', floor: '(基础层)', sel: true },
    { name: '隔震层 (-2.15~-0.13)' },
    { name: '一层梁配筋图', floor: '(隔震层)' },
    { name: '一层板配筋图', floor: '(隔震层)' },
    { name: '框架柱平面布置图-1', floor: '(隔震层)' },
    { name: '一层平面图-1', floor: '(隔震层)' },
    { name: '幼儿园结施2023.7.19-2', floor: '(隔震层)' },
    { name: '首层 (-0.13~4.08)' },
    { name: '二层梁配筋图', floor: '(首层)' },
    { name: '二层板配筋图', floor: '(首层)' },
];

function PanelTabs({ tabs, active }: { tabs: string[]; active: string }) {
    return (
        <div className="flex h-[22px] shrink-0 border-b border-[#dcdcdc] bg-[#f1f1f1]">
            {tabs.map((t) => (
                <button
                    key={t}
                    className={clsx(
                        'w-[65px] border-r border-[#c8c8c8]',
                        t === active ? 'bg-[#f5f5f5] font-bold text-[#333]' : 'bg-[#e0e0e0] text-[#888]',
                    )}
                >
                    {t}
                </button>
            ))}
        </div>
    );
}

function DrawingPanel() {
    const tools = [
        { icon: 'frameAdd', label: '添加图纸', caret: true },
        { icon: 'sheetPen', label: '分割', caret: true },
        { icon: 'locate', label: '定位' },
        { icon: 'del', label: '删除' },
    ];
    return (
        <section className="flex h-[291px] shrink-0 flex-col overflow-hidden border border-[#d8d8d8] bg-white">
            <PanelStrip />
            <PanelTabs tabs={['构件列表', '图纸管理']} active="图纸管理" />
            <div className="flex h-7 shrink-0 items-center gap-2.5 border-b border-[#dcdcdc] pl-[3px]">
                {tools.map((t) => (
                    <button key={t.label} className="flex items-center gap-1">
                        <Glyph16 name={t.icon} />
                        {t.label}
                        {t.caret && <Caret className="ml-0.5 text-[#888]" />}
                    </button>
                ))}
            </div>
            <div className="flex min-h-0 flex-1 justify-between overflow-hidden">
                <table className="h-fit w-[268px] table-fixed border-collapse">
                    <thead>
                        <tr className="h-[25px]">
                            <th className="w-[170px] border border-[#6fadf3] bg-[#80bbfb] text-white">名称</th>
                            <th className="w-[36px] border border-[#dcdcdc] font-normal">锁定</th>
                            <th className="border border-[#dcdcdc] font-normal">对应楼层</th>
                        </tr>
                    </thead>
                    <tbody>
                        {DRAWINGS.map((r) =>
                            r.floor ? (
                                <tr key={r.name} className={clsx('h-[21px]', r.sel && 'bg-[#d5e9ff]')}>
                                    <td className={clsx('border border-[#dcdcdc] p-0', r.sel && 'outline-2 -outline-offset-2 outline-[#808080]')}>
                                        <span className="flex items-center">
                                            <svg viewBox="0 0 24 20" className="h-5 w-6 shrink-0" fill="none" stroke="#e0e0e0">
                                                <path d="M7.500 0V20M7.500 9.500H24" />
                                            </svg>
                                            <span className="pl-1.5 whitespace-nowrap">{r.name}</span>
                                        </span>
                                    </td>
                                    <td className="border border-[#dcdcdc] p-0">
                                        <Glyph16 name="lock" className="mx-auto h-4 w-3.5" />
                                    </td>
                                    <td className="border border-[#dcdcdc] py-0 pl-[3px]">{r.floor}</td>
                                </tr>
                            ) : (
                                <tr key={r.name} className="h-[21px]">
                                    <td colSpan={3} className="border border-[#dcdcdc] p-0">
                                        <span className="flex items-center gap-1.5 pl-0.5">
                                            <button aria-label="折叠" className="size-3 border border-[#808080] text-[12px] leading-[9px]">
                                                −
                                            </button>
                                            {r.name}
                                        </span>
                                    </td>
                                </tr>
                            ),
                        )}
                    </tbody>
                </table>
                <div className="mt-[18px] mr-[3px] h-[31px] w-2 rounded-full bg-[#c9c9c9]" />
            </div>
        </section>
    );
}

// HRB400 bar mark used in every reinforcement string
function BarMark() {
    return (
        <svg viewBox="0 0 10 10" className="mx-px mb-[5px] inline-block size-2.5" fill="none" stroke="#333" strokeWidth=".9">
            <path d="M2.500 1.500H7.500Q9.500 1.500 9.500 4Q9.500 6.500 7.500 6.500H2.500Q.5 6.500 .5 4Q.5 1.500 2.500 1.500ZM5 0V10M3 2V8M7 2V8M1 8.500H9" />
        </svg>
    );
}

function Rebar({ text }: { text: string }) {
    const parts = text.split('#');
    return (
        <>
            {parts[0]}
            {parts.length > 1 && <BarMark />}
            {parts[1]}
        </>
    );
}

// [row number, name, value, kind] kind: b = common (blue), g = read only, x = expandable
const PROPS: [number, string, string, string][] = [
    [3, '截面宽度(mm)', '610', 'b'],
    [4, '截面高度(mm)', '900', 'b'],
    [5, '轴线距梁左边...', '(305)', ''],
    [6, '跨数量', '4B', ''],
    [7, '箍筋', '#8@200(4)', 'b'],
    [8, '肢数', '4', 'b'],
    [9, '下部通长筋', '4#18', 'b'],
    [10, '上部通长筋', '6#25', 'b'],
    [11, '侧面构造或受...', '', 'b'],
    [12, '拉筋', '', 'b'],
    [13, '材质', '现浇混凝土', 'b'],
    [14, '混凝土类型', '(普通砼(坍落度10～90mm),砾石5～15...', 'b'],
    [15, '混凝土强度等级', '(C20)', 'b'],
    [16, '混凝土外加剂', '(无)', 'b'],
    [17, '泵送类型', '(混凝土泵)', 'b'],
    [18, '截面周长(m)', '3.02', 'bg'],
    [19, '截面面积(m²)', '0.549', 'bg'],
    [20, '起点顶标高(m)', '层底标高加梁高(-2.15)', ''],
    [21, '终点顶标高(m)', '层底标高加梁高(-2.15)', ''],
    [22, '备注', '', ''],
    [23, '钢筋业务属性', '', 'x'],
    [34, '土建业务属性', '', 'x'],
    [38, '显示样式', '', 'x'],
];

function PropertyPanel() {
    return (
        <section className="flex min-h-0 flex-1 flex-col overflow-hidden border border-[#d8d8d8] bg-white">
            <PanelStrip />
            <PanelTabs tabs={['属性列表', '图层管理']} active="属性列表" />
            <div className="flex min-h-0 flex-1 justify-between overflow-hidden">
                <table className="h-fit w-[353px] table-fixed border-collapse">
                    <thead>
                        <tr className="h-[21px]">
                            <th className="w-[21px] border-r border-b border-[#dcdcdc]" />
                            <th className="w-[101px] border-r border-b border-[#dcdcdc] p-0 font-normal">属性名称</th>
                            <th className="border-r border-b border-[#dcdcdc] p-0 font-normal">属性值</th>
                        </tr>
                    </thead>
                    <tbody>
                        {PROPS.map(([no, name, value, kind]) => (
                            <tr key={no} className="h-[21px] leading-4 whitespace-nowrap">
                                <td className="border-r border-b border-[#cfcfcf] bg-[#f1f1f1] p-0 text-center">{no}</td>
                                <td className={clsx('border-r border-b border-[#dcdcdc] py-0 pl-[3px]', kind.startsWith('b') && 'text-[#0f5fff]')}>
                                    {kind === 'x' ? (
                                        <span className="flex items-center gap-1.5">
                                            <button aria-label="展开" className="-ml-px size-[13px] rounded-xs border border-[#888] text-[12px] leading-[10px]">
                                                +
                                            </button>
                                            {name}
                                        </span>
                                    ) : (
                                        name
                                    )}
                                </td>
                                <td className={clsx('overflow-hidden border-r border-b border-[#dcdcdc] py-0 pl-[3px]', kind === 'bg' && 'text-[#999]')}>
                                    <Rebar text={value} />
                                </td>
                            </tr>
                        ))}
                    </tbody>
                </table>
                <div className="mt-[54px] mr-[3px] h-[445px] max-h-full w-2 rounded-full bg-[#c9c9c9]" />
            </div>
        </section>
    );
}

/* ---------- drawing canvas ---------- */

function AxisBubble({ x, y, label }: { x: number; y: number; label: string }) {
    return (
        <g transform={`translate(${x} ${y})`}>
            <path d="M0-12L8.500-8.500L12 0L8.500 8.500L0 12L-8.500 8.500L-12 0L-8.500-8.500Z" fill="none" stroke="#008000" />
            <text textAnchor="middle" y="6" fontSize="18" fill="#f5f5f5">
                {label}
            </text>
        </g>
    );
}

function CadText({ x, y, size, color, thin, children }: { x: number; y: number; size: number; color: string; thin?: boolean; children: string }) {
    return (
        <text
            transform={`translate(${x} ${y}) rotate(-90)`}
            fontSize={size}
            fill={color}
            fontWeight={thin ? 100 : 400}
            fontFamily={thin ? 'Roboto, "Liberation Sans", sans-serif' : '"Noto Sans", sans-serif'}
        >
            {children}
        </text>
    );
}

function ViewTools() {
    const cube = 'M1 5L5 1H19V15L15 19H1ZM1 5H15V19M15 5L19 1';
    return (
        <div className="absolute top-0 right-0 flex h-[246px] w-[33px] flex-col items-center rounded-sm border border-[#d5d5d5] bg-white pt-3">
            <button aria-label="动态观察" className="flex h-[29px] items-start">
                <svg viewBox="0 0 20 20" className="size-5" fill="none" stroke="#4c5566">
                    <circle cx="10" cy="10" r="9" />
                    <path d="M4 8Q-2 14 2 16Q7 17 14 11Q22 4 18 2Q16 1 13 2" stroke="#1f78e6" />
                </svg>
            </button>
            <button aria-label="三维" className="flex h-[29px] items-start">
                <svg viewBox="0 0 20 20" className="size-5" fill="none" stroke="#4c5566">
                    <path d={cube} />
                    <text x="2" y="16" fontSize="8" fontWeight="700" fill="#1f78e6" stroke="none">
                        3D
                    </text>
                </svg>
            </button>
            <button aria-label="俯视" className="flex h-[39px] flex-col items-center gap-1.5">
                <svg viewBox="0 0 20 20" className="size-5" fill="none" stroke="#4c5566">
                    <path d={cube} />
                    <path d="M1 5L5 1H19L15 5Z" fill="#cfe2fb" stroke="#1f78e6" />
                </svg>
                <Caret className="text-[#444]" />
            </button>
            <button aria-label="实体" className="flex h-[39px] flex-col items-center gap-1.5">
                <svg viewBox="0 0 20 20" className="size-5" fill="#cfe2fb" stroke="#1f78e6">
                    <path d={cube} />
                </svg>
                <Caret className="text-[#444]" />
            </button>
            <button aria-label="全屏" className="flex h-[29px] items-start">
                <svg viewBox="0 0 20 20" className="size-5" fill="none" stroke="#4c5566">
                    <path d="M.5 7V.5H7M13 .5H19.500V7M19.500 13V19.500H13M7 19.500H.5V13" />
                </svg>
            </button>
            <button aria-label="局部三维" className="flex h-[27px] items-start">
                <svg viewBox="0 0 20 20" className="size-5" fill="none" stroke="#1f78e6">
                    <path d="M.5 .5H19.500V19.500H.5Z" stroke="#4c5566" strokeDasharray="3 1.500" />
                    <path d="M10 4.500L15 7V13L10 16L5 13V7ZM5 7L10 10L15 7M10 10V16" />
                </svg>
            </button>
            <hr className="mb-1.5 w-[23px] border-[#666]" />
            <button aria-label="显示设置">
                <svg viewBox="0 0 20 20" className="size-5" fill="none" stroke="#4c5566">
                    <path d="M10 19.500H.5V.5H19.500V11M4 5.500h2M8 5.500h8M4 9.500h2M8 9.500h5M4 13.500h2" />
                    <path d="M11 16.500Q15.500 11.500 20 16.500Q15.500 21 11 16.500ZM15 16h1v1h-1Z" stroke="#1f78e6" />
                </svg>
            </button>
        </div>
    );
}

function Canvas() {
    return (
        <div className="relative min-h-0 flex-1 overflow-hidden bg-black">
            <svg className="block h-full w-full" fontFamily='"Noto Sans", sans-serif'>
                <path d="M78.500 0V640" stroke="#007800" />
                <rect x="338" width="121" height="100%" fill="#ffff00" />
                <path d="M338.500 0V640M459.500 0V640" stroke="#6f93c0" />
                <rect x="945" width="117" height="100%" fill="#eb7373" />
                <path d="M974.500 0V640" stroke="#ff0000" />
                <path d="M975 348.500H1400" stroke="#8a0000" />
                <path d="M1032 403.500H1400" stroke="#c8c800" strokeWidth="2" />
                <AxisBubble x={371} y={12} label="1" />
                <AxisBubble x={974} y={12} label="2" />
                <AxisBubble x={1013} y={12} label="2" />
                <AxisBubble x={371} y={627} label="1" />
                <CadText x={333} y={330} size={36} color="#f07878" thin>
                    7C25
                </CadText>
                <CadText x={291} y={338} size={41} color="#ffffff">
                    7C25
                </CadText>
                <CadText x={523} y={338} size={41} color="#ffffff">
                    4C18
                </CadText>
                <CadText x={514} y={318} size={36} color="#f07878" thin>
                    4C18
                </CadText>
                <CadText x={585} y={402} size={34} color="#f07878" thin>
                    C10@200(4)
                </CadText>
                <CadText x={512} y={636} size={36} color="#f07878" thin>
                    88
                </CadText>
                <CadText x={1338} y={376} size={37} color="#ffff00" thin>
                    JL02(1) 600*900
                </CadText>
                <path d="M49.500 588V572" stroke="#00ff00" strokeWidth="4" />
                <path d="M43.500 574L49.500 559L55.500 574Z" fill="#00ff00" />
                <path d="M50 589H66" stroke="#ff0000" strokeWidth="4" />
                <path d="M63 583L78 589L63 595Z" fill="#ff0000" />
                <circle cx="49.500" cy="589" r="5" fill="#0000c8" />
                <text x="45" y="558" fontSize="16" fill="#00ff00">
                    Y
                </text>
                <text x="81" y="595" fontSize="16" fill="#ff0000">
                    X
                </text>
            </svg>
            <ViewTools />
            <div className="absolute inset-x-0 bottom-0 flex h-[27px] items-center bg-[#333333]/80 pl-[327px] font-bold text-white">
                <svg viewBox="0 0 16 18" className="mr-1 h-[18px] w-4" fill="none" stroke="#fff">
                    <path d="M15 1L9 7M9 2V7H14M1 17L7 11M2 11H7V16" />
                </svg>
                按鼠标左键选择梁图元，按右键或 ESC 退出；可以通过回车键及 Shift+\"→←↑\" 光标键在跨之间、上下输入框之间进行切换
            </div>
            <div className="absolute bottom-8 left-[316px] flex h-[29px] w-[278px] items-center justify-between rounded-sm bg-[#0090ff] pr-5 pl-[7px] text-white">
                点击图标可调节提示信息位置~
                <button className="text-[#8fcdff]">不再提示</button>
                <svg viewBox="0 0 10 5" className="absolute -bottom-[5px] left-4 h-[5px] w-2.5">
                    <path d="M0 0H10L5 5Z" fill="#0090ff" />
                </svg>
            </div>
        </div>
    );
}

/* ---------- beam table ---------- */

const COL_WIDTHS = [
    'w-[6px]', 'w-[61px]', 'w-[61px]', 'w-[61px]', 'w-[61px]', 'w-[61px]', 'w-[41px]', 'w-[41px]', 'w-[41px]', 'w-[41px]', 'w-[101px]',
    'w-[81px]', 'w-[81px]', 'w-[81px]', 'w-[81px]', 'w-[81px]', 'w-[81px]', 'w-[81px]', 'w-[101px]', 'w-[81px]', 'w-[106px]', 'w-[34px]',
];

const SUB_HEADS = [
    '起点标高', '终点标高', 'A1', 'A2', 'A3', 'A4', '跨长', '截面(B*H)', '距左边线距离',
    '左支座钢筋', '跨中钢筋', '右支座钢筋', '上通长筋', '上部钢筋', '侧面通长筋', '侧面原位标注筋', '拉筋',
];

const SPANS = [
    ['1', '-2.15', '-2.15', '(245)', '(655)', '(450)', '', '(6805)', '(610*900)', '(305)', '4#18', '5#18', '', '7#18', '6#25', '', '', '', ''],
    ['2', '-2.15', '-2.15', '', '(450)', '(450)', '', '(4800)', '(610*900)', '(305)', '', '', '', '10#18 2/8', '', '', '', '', ''],
    ['3', '-2.15', '-2.15', '', '(450)', '(450)', '', '(4700)', '(610*900)', '(305)', '', '', '8#18', '7#18', '', '', '', '', ''],
    ['4', '-2.15', '-2.15', '', '(450)', '(660)', '(240)', '(7310)', '(610*900)', '(305)', '', '16#18 8/8', '4#18', '5#18', '', '7#25', '', '', ''],
];

function BeamTable() {
    const th = 'border border-[#dcdcdc] p-0 font-normal';
    return (
        <section className="flex h-[200px] shrink-0 flex-col overflow-hidden border border-[#d8d8d8] bg-white">
            <PanelStrip />
            <div className="h-[22px] shrink-0 border-b border-[#dcdcdc] bg-[#f1f1f1] pl-2 leading-5 text-[#777]">梁平法表格</div>
            <div className="flex h-7 shrink-0 items-center gap-3 pl-[5px]">
                {['复制跨数据', '粘贴跨数据', '输入当前列数据', '删除当前列数据', '页面设置', '调换起始跨', '悬臂钢筋代号'].map((t, i) => (
                    <button key={t} disabled={i > 0 && i < 4} className="disabled:text-[#aaa]">
                        {t}
                    </button>
                ))}
            </div>
            <div className="min-h-0 flex-1 overflow-hidden">
                <table className="w-[1465px] table-fixed border-collapse whitespace-nowrap">
                    <colgroup>
                        {COL_WIDTHS.map((w, i) => (
                            <col key={i} className={w} />
                        ))}
                    </colgroup>
                    <thead className="leading-4">
                        <tr className="h-[17px]">
                            <th rowSpan={2} className={th} />
                            <th rowSpan={2} className={th}>位置</th>
                            <th rowSpan={2} className={th}>名称</th>
                            <th rowSpan={2} className="border border-[#6fadf3] bg-[#80bbfb] p-0 font-normal text-white">跨号</th>
                            <th colSpan={2} className={th}>标高</th>
                            <th colSpan={7} className={th}>构件尺寸(mm)</th>
                            <th rowSpan={2} className={th}>下通长筋</th>
                            <th colSpan={3} className={th}>下部钢筋</th>
                            <th colSpan={2} className={th}>上部钢筋</th>
                            <th colSpan={3} className={th}>侧面钢筋</th>
                        </tr>
                        <tr className="h-[17px]">
                            {SUB_HEADS.map((h) => (
                                <th key={h} className={th}>{h}</th>
                            ))}
                        </tr>
                    </thead>
                    <tbody>
                        {SPANS.map((row, i) => (
                            <tr key={i} className="h-[21px] leading-4">
                                <td className={clsx('overflow-hidden border border-[#dcdcdc] p-0', i === 3 ? 'bg-[#80bbfb] text-white' : 'bg-[#f1f1f1]')}>{i + 1}</td>
                                {i === 0 && (
                                    <>
                                        <td rowSpan={4} className="border border-[#dcdcdc] py-0 pl-[3px] leading-[17px]">
                                            &lt;1+145,
                                            <br />A<br />
                                            +145;1+
                                            <br />
                                            145,F-1...
                                        </td>
                                        <td rowSpan={4} className="border border-[#dcdcdc] py-0 pl-[3px]">JL01</td>
                                    </>
                                )}
                                {row.map((v, j) => (
                                    <td
                                        key={j}
                                        className={clsx(
                                            'border border-[#dcdcdc] py-0 pl-[3px]',
                                            i === 3 && j === 0 && 'outline-2 -outline-offset-1 outline-[#7a7a7a]',
                                        )}
                                    >
                                        <Rebar text={v} />
                                    </td>
                                ))}
                            </tr>
                        ))}
                    </tbody>
                </table>
            </div>
            <div className="flex h-4 shrink-0 items-center justify-between px-[5px]">
                <Caret className="rotate-90 text-[#444]" />
                <div className="mr-auto ml-[3px] h-2 w-[634px] rounded-full bg-[#c9c9c9]" />
                <Caret className="-rotate-90 text-[#444]" />
            </div>
        </section>
    );
}

/* ---------- status bar and taskbar ---------- */

function StatusBar() {
    const btn = 'flex h-[25px] items-center justify-center gap-1.5 rounded-sm border';
    return (
        <footer className="flex h-[31px] shrink-0 items-center bg-[#fcfcfc] pl-0.5">
            <span className="w-[90px]">层高：&nbsp; 0.9</span>
            <span className="w-[140px]">标高：&nbsp; -3.05~-2.15</span>
            <span className="w-[110px]">选中图元：1(1)</span>
            <span className="w-[110px]">隐藏图元：0</span>
            <div className="flex items-center gap-[3px]">
                <button aria-label="正交" className={clsx(btn, 'w-[25px] border-[#2f80e0] bg-[#d9e8fb]')}>
                    <svg viewBox="0 0 16 16" className="size-4" fill="none" stroke="#1f78e6"><path d="M2.500 1V13.500H15M2.500 8.500H7.500V13" /></svg>
                </button>
                <button aria-label="捕捉" className={clsx(btn, 'w-[36px] border-[#2f80e0] bg-[#d9e8fb]')}>
                    <svg viewBox="0 0 16 16" className="size-4" fill="none" stroke="#4c5566"><path d="M4 2.500H14.500V14.500H2.500V4" /><circle cx="2.500" cy="2.500" r="1.500" stroke="#1f78e6" /></svg>
                    <Caret className="text-[#444]" />
                </button>
                <button aria-label="交点" className={clsx(btn, 'ml-[3px] w-[25px] border-[#b5b5b5]')}>
                    <svg viewBox="0 0 16 16" className="size-4" fill="none" stroke="#666"><path d="M1 1L15 15M15 1L1 15" /></svg>
                </button>
                <button aria-label="角度" className={clsx(btn, 'ml-[3px] w-[36px] border-[#999]')}>
                    <svg viewBox="0 0 16 16" className="size-4" fill="none" stroke="#4c5566"><path d="M14 2L2 14H16M7 8Q10 10 10 14" /></svg>
                    <Caret className="text-[#444]" />
                </button>
                <button aria-label="动态输入" className={clsx(btn, 'w-[36px] border-[#999]')}>
                    <svg viewBox="0 0 16 16" className="size-4" fill="none" stroke="#4c5566"><path d="M4 1V8M.5 4.500H7.500" /><path d="M6 9H16V13H6Z" fill="#4c5566" /></svg>
                    <Caret className="text-[#444]" />
                </button>
                <button aria-label="图层" className={clsx(btn, 'w-[25px] border-[#999]')}>
                    <svg viewBox="0 0 16 16" className="size-4" fill="none" stroke="#4c5566"><path d="M2 1.500H11V11.500H2Z" /><path d="M4 3H9.500V10H4Z" fill="#4c5566" /><path d="M4 13.500H10M13.500 4V9" /><path d="M10 8L14 12H12L10 14Z" fill="#4c5566" /></svg>
                </button>
                <button aria-label="折线" className={clsx(btn, 'w-[25px] border-[#999]')}>
                    <svg viewBox="0 0 16 16" className="size-4" fill="none" stroke="#4c5566"><path d="M1 15Q3 4 13 2M1 15h2M12 1h2v2h-2Z" /><path d="M10 8L14 12H12L10 14Z" fill="#4c5566" /></svg>
                </button>
            </div>
        </footer>
    );
}

function Taskbar() {
    return (
        <div className="flex h-10 shrink-0 items-center bg-[linear-gradient(to_right,#d3dde3,#d8d9dd_35%,#e2d8dc_58%,#d5e2e8_66%,#dadee8_80%,#d9d6d5_88%,#dbd7da)]">
            <button aria-label="开始菜单" className="flex w-12 shrink-0 justify-center">
                <svg viewBox="0 0 16 16" className="size-4">
                    <path d="M0 2.500L7 1.500V7.500H0ZM8 1.300L16 0V7.500H8ZM0 8.500H7V14.500L0 13.500ZM8 8.500H16V16L8 14.700Z" />
                </svg>
            </button>
            <label className="flex h-10 w-[344px] shrink-0 items-center gap-2.5 border border-[#c2c6c9] bg-white pl-[11px]">
                <Search className="size-[18px] shrink-0 -scale-x-100 text-black" strokeWidth={1.5} />
                <input placeholder="在这里输入你要搜索的内容" className="w-full text-[14px] outline-none placeholder:text-[#333]" />
            </label>
            <div className="flex w-[300px] shrink-0 items-center pl-4">
                <button aria-label="任务视图" className="w-[47px]">
                    <svg viewBox="0 0 18 18" className="size-[18px]" fill="none" stroke="#000">
                        <path d="M1.500 0V3.500H12.500V0M1.500 6.500H12.500V12.500H1.500ZM1.500 18V15.500H12.500V18M16.500 1V17M15 6.500h3" />
                    </svg>
                </button>
                <button aria-label="此电脑" className="w-[49px]">
                    <svg viewBox="0 0 24 24" className="size-6">
                        <path d="M7 2L22 6V18L7 13Z" fill="#2ea3ec" />
                        <path d="M7 2L22 6L8 11Z" fill="#6cc6f7" />
                        <path d="M0 19L6 14L17 18L11 23Z" fill="#b8c2ca" />
                    </svg>
                </button>
                <button aria-label="文件资源管理器" className="w-[49px]">
                    <svg viewBox="0 0 24 24" className="size-6">
                        <path d="M2 3H10L12 5H22V21H2Z" fill="#fbcf5b" />
                        <path d="M2 3H10L12 5L11 7H2Z" fill="#e0a22a" />
                        <path d="M6 12H19V22H15V17H10V22H6Z" fill="#2f8fdf" />
                    </svg>
                </button>
                <button aria-label="QQ" className="w-[48px]">
                    <svg viewBox="0 0 24 26" className="h-[26px] w-6">
                        <ellipse cx="12" cy="14" rx="9" ry="10" fill="#111" />
                        <ellipse cx="12" cy="8" rx="7" ry="7.500" fill="#111" />
                        <ellipse cx="12" cy="17" rx="6" ry="7" fill="#fff" />
                        <circle cx="9.500" cy="6" r="1.800" fill="#fff" />
                        <circle cx="14.500" cy="6" r="1.800" fill="#fff" />
                        <ellipse cx="12" cy="9.500" rx="4" ry="1.300" fill="#f5a800" />
                        <path d="M4 12Q12 16 20 12V15Q14 17 10 16V20H7V15L4 14Z" fill="#e3171b" />
                        <path d="M5 24Q8 21 11 24ZM13 24Q16 21 19 24Z" fill="#f5a800" />
                    </svg>
                </button>
                <button aria-label="微信" className="w-[49px]">
                    <svg viewBox="0 0 24 24" className="size-6">
                        <ellipse cx="9" cy="9" rx="8.500" ry="7.500" fill="#27cf4c" />
                        <path d="M4 14L3 19L8 16Z" fill="#27cf4c" />
                        <ellipse cx="17" cy="16" rx="7" ry="6" fill="#f0f0f0" />
                        <path d="M5.500 7h2v2h-2ZM11 7h2v2h-2Z" fill="#137a2b" />
                        <path d="M14 14h1.500v1.500H14ZM18.500 14H20v1.500h-1.500Z" fill="#888" />
                    </svg>
                </button>
                <button aria-label="WinRAR" className="w-6 shrink-0">
                    <svg viewBox="0 0 24 24" className="size-6">
                        <path d="M0 0H24V8H0Z" fill="#8e2436" />
                        <path d="M0 8H24V16H0Z" fill="#27408f" />
                        <path d="M0 16H24V24H0Z" fill="#23693a" />
                        <path d="M0 4H24M0 12H24M0 20H24" stroke="#00000055" strokeWidth="2" />
                        <path d="M9 0H15V24H9Z" fill="#e0932a" />
                        <path d="M8 7H16V17H8Z" fill="#c9711c" />
                        <path d="M10 9H14V15H10Z" fill="#fff3c4" />
                    </svg>
                </button>
            </div>
            <button className="flex h-10 w-[152px] shrink-0 items-center gap-1 border-b-2 border-[#0078d7] pl-1.5">
                <svg viewBox="0 0 24 24" className="size-6 shrink-0">
                    <circle cx="12" cy="12" r="11.500" fill="#1673c9" />
                    <path d="M1 10Q3 0 13 .5Q24 2 23.500 11Q22 16 15 15Q13 14 15 11Q14 7 9 7Q3 7 1 10Z" fill="#3ec98c" />
                    <path d="M1 10Q3 0 13 .5L9 7Q3 7 1 10Z" fill="#22b4e0" />
                    <path d="M9 10Q6 16 12 20Q17 22 21 19Q18 24 11 23.500Q5 22 5 15Q5 11 9 10Z" fill="#0b4a94" />
                </svg>
                我来问_答疑解惑-...
            </button>
            <button className="ml-[5px] flex h-10 w-[160px] shrink-0 items-center gap-1 border-b-2 border-[#0078d7] bg-[#f1efef] pl-2.5">
                <span className="flex size-6 shrink-0 items-center justify-center rounded-sm bg-[#c9e6fb]">
                    <Logo className="size-5" />
                </span>
                广联达BIM土建计...
            </button>
            <div className="ml-auto flex items-center pr-[25px] text-[#111]">
                <ChevronUp className="size-[18px]" strokeWidth={1.5} />
                <Volume2 className="ml-1.5 size-[18px]" strokeWidth={1.5} />
                <svg viewBox="0 0 23 16" className="ml-2 h-4 w-[23px]" fill="none" stroke="#111">
                    <path d="M.5 .5H22.500V15.500H.5Z" />
                    <path d="M3 4.500H20M3 8.500H20" strokeDasharray="2 1" />
                    <path d="M5 12.500H18" />
                </svg>
                <span className="ml-[7px] text-[16px]">英</span>
                <div className="ml-1 w-[68px] text-center leading-[19px]">
                    8:40
                    <br />
                    2023/9/19
                </div>
                <svg viewBox="0 0 16 18" className="ml-4 h-[18px] w-4" fill="none" stroke="#111" strokeWidth="1.300">
                    <path d="M.7 1H15.300V13.500H11L8 17V13.500H.7Z" />
                </svg>
            </div>
        </div>
    );
}

export default function App() {
    return (
        <div className="flex h-screen flex-col overflow-hidden bg-white font-['Noto_Sans','Noto_Sans_CJK_SC',sans-serif] text-[12px] leading-4 text-[#333]">
            <TitleBar />
            <Ribbon />
            <ContextBar />
            <main className="flex min-h-0 flex-1 gap-1">
                <NavPanel />
                <div className="flex w-[371px] shrink-0 flex-col gap-1">
                    <DrawingPanel />
                    <PropertyPanel />
                </div>
                <div className="relative flex min-w-0 flex-1 flex-col">
                    <div className="absolute top-[270px] -left-1 flex h-[100px] w-1 items-center bg-[#5f6b7b]" />
                    <Canvas />
                    <div className="flex h-1 shrink-0 justify-center">
                        <div className="flex w-[100px] justify-center bg-[#5f6b7b]">
                            <Caret className="text-white" />
                        </div>
                    </div>
                    <BeamTable />
                </div>
            </main>
            <StatusBar />
            <Taskbar />
        </div>
    );
}
